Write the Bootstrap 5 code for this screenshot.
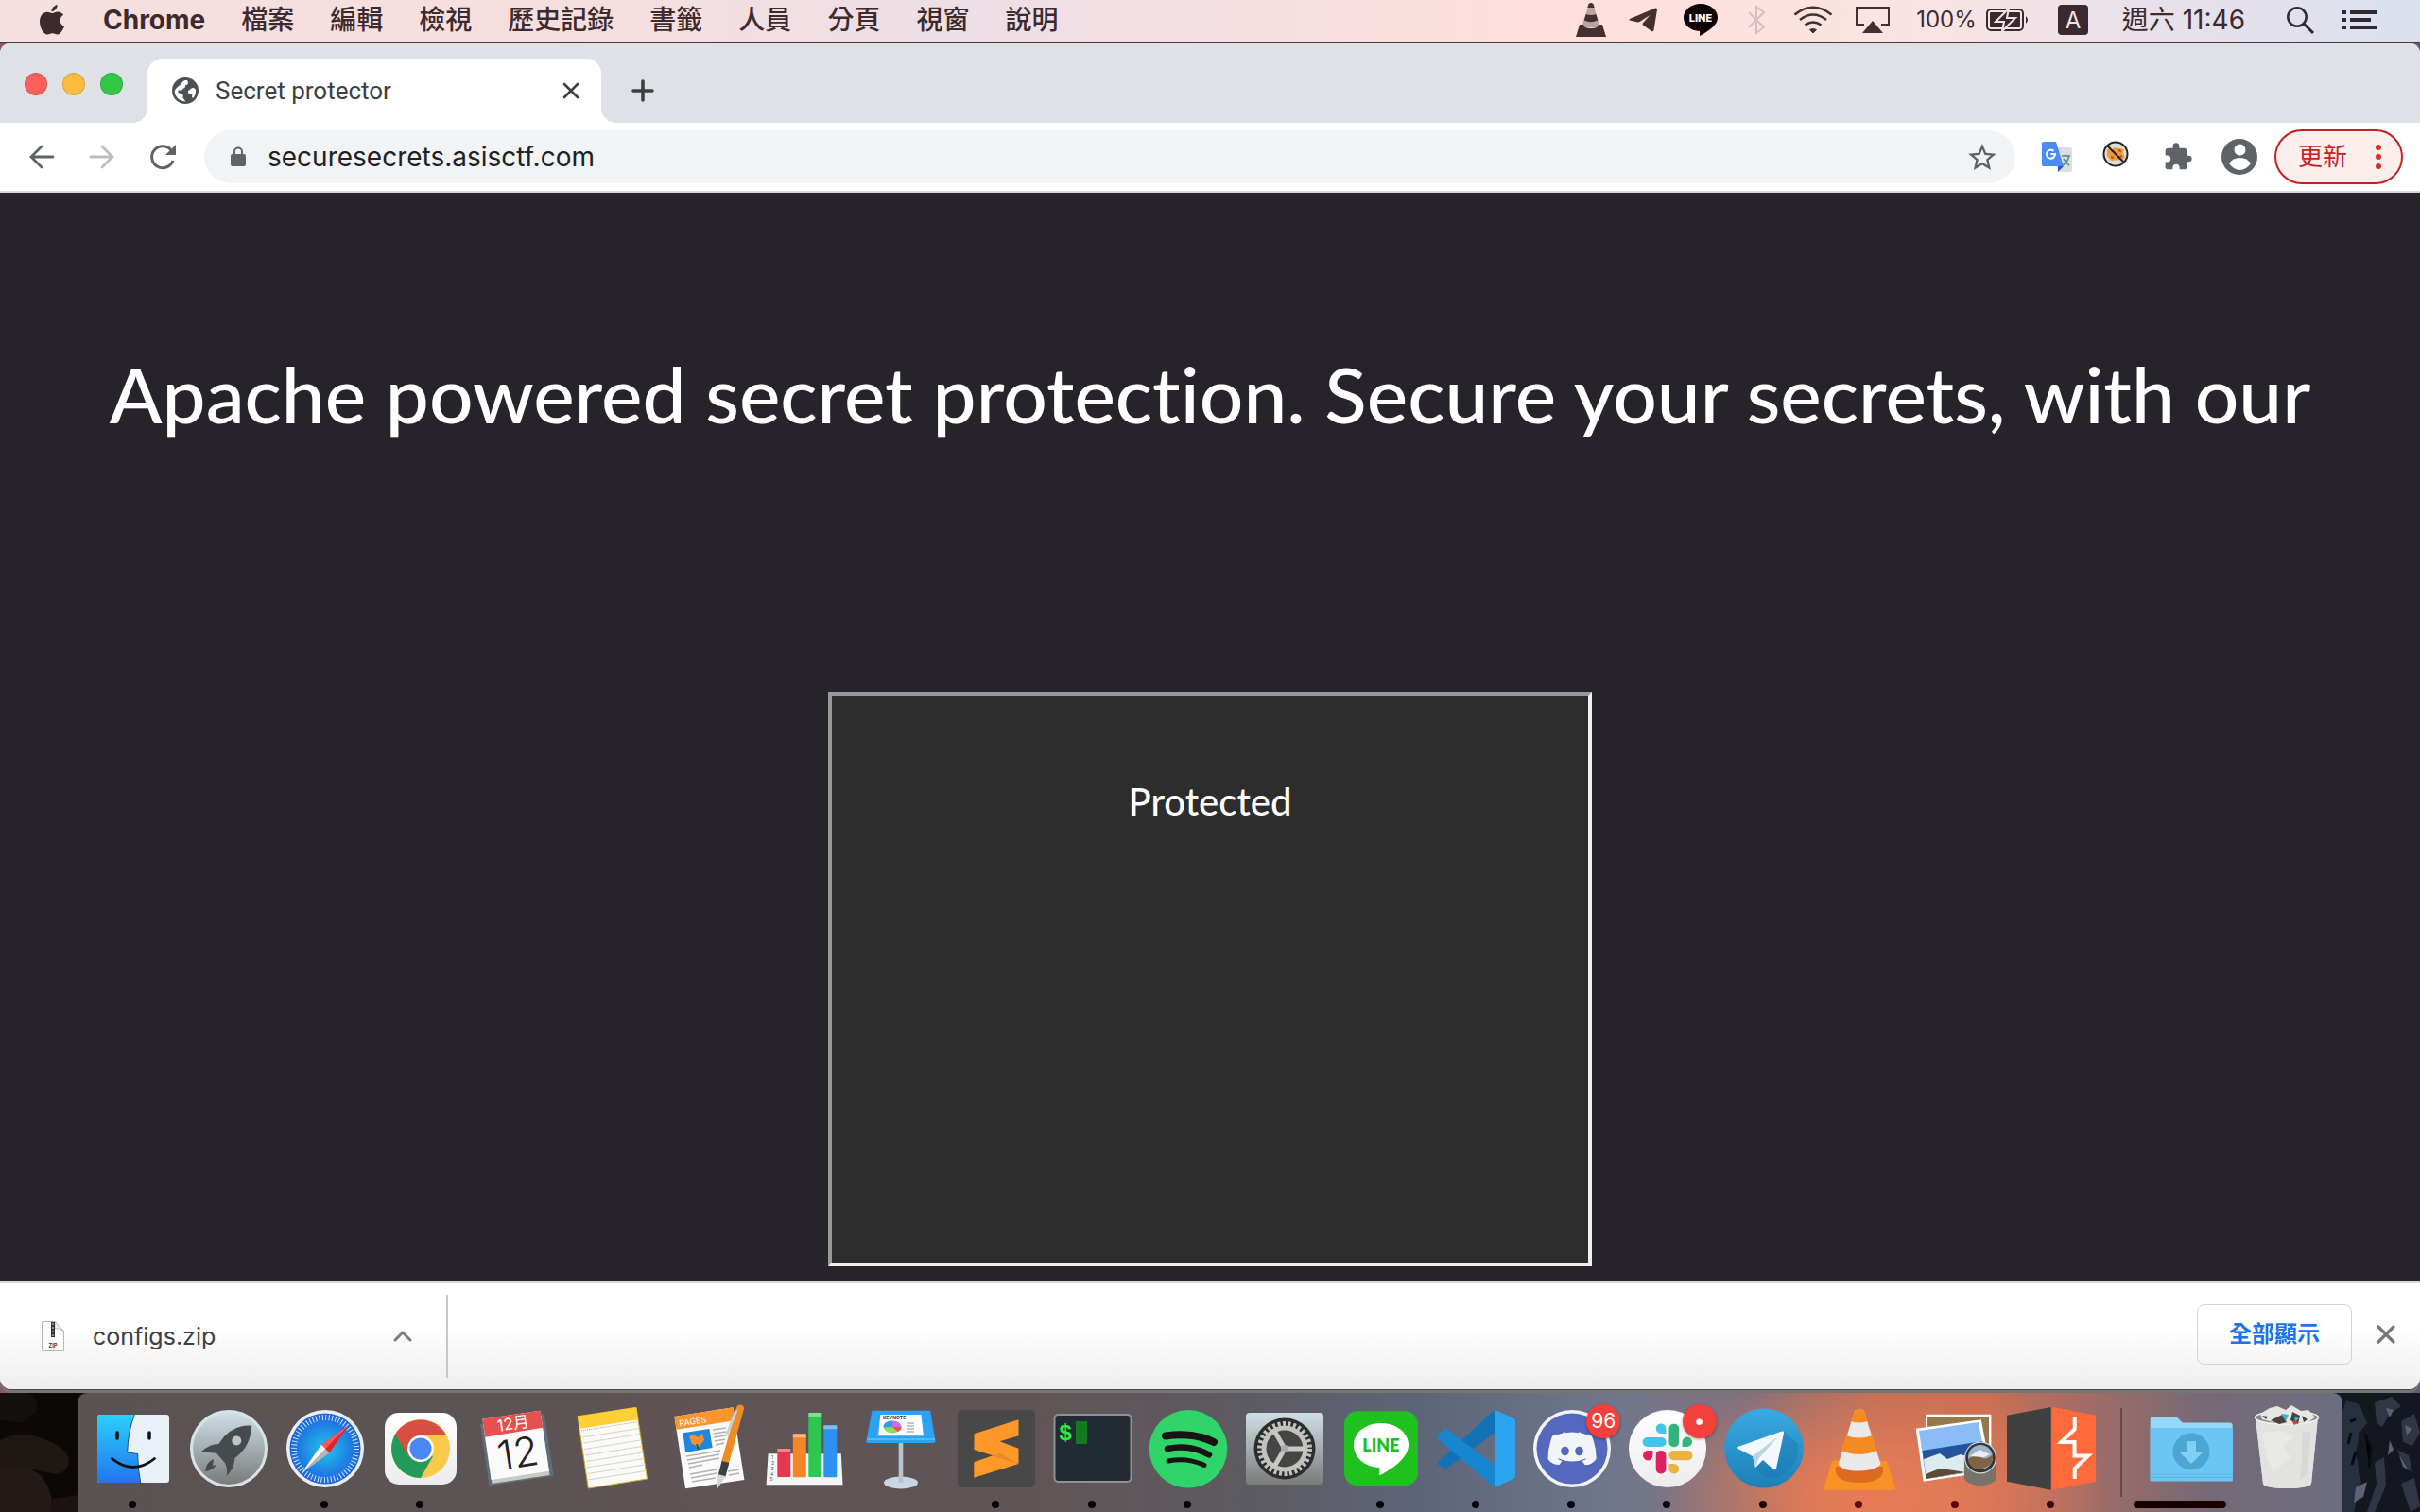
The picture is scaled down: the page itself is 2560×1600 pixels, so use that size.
<!DOCTYPE html>
<html lang="zh-Hant">
<head>
<meta charset="utf-8">
<meta name="viewport" content="width=device-width, initial-scale=1">
<title>Secret protector</title>
<link href="https://cdn.jsdelivr.net/npm/bootstrap@5.3.0/dist/css/bootstrap.min.css" rel="stylesheet">
<style>
  body { font-family: Inter, "Noto Sans CJK TC", sans-serif; font-size: 25px; line-height: 32px; background: #0d0c0e; overflow-x: hidden; }
  svg { display: block; flex: none; overflow: visible; }
  button { font-family: inherit; }
  .ui-btn { border: 0; padding: 0; background: none; display: flex; color: inherit; }
  .gl-10 { margin-left: 10px; } .gl-18 { margin-left: 18px; } .gl-24 { margin-left: 24px; } .gl-28 { margin-left: 28px; }
  .gl-30 { margin-left: 30px; } .gl-32 { margin-left: 32px; } .gl-36 { margin-left: 36px; } .gl-44 { margin-left: 44px; }
  .menu-bar { height: 46px; padding: 0 46px 2px 42px; color: #3d2a2d; border-bottom: 2px solid #57343b;
    background: linear-gradient(90deg, #f6dfe0 0, #f7dede 24%, #ecdfe6 39%, #f3dfe2 48%, #ffdfdd 64%, #f9e4e3 80%, #e9e1ea 88%, #dbe0ee 100%); }
  .menu-bar a { color: inherit; text-decoration: none; white-space: nowrap; }
  .menu-list { gap: 38px; margin-left: 41px; font-size: 28px; font-weight: 500; }
  .app-name { font-weight: 700; }
  .menu-clock { font-size: 28px; white-space: nowrap; }
  .menu-pct { font-size: 24px; }
  .desk-top { background: linear-gradient(90deg, #8a5a60, #5a5a7a); }
  .win { border-radius: 10px 10px 12px 12px; overflow: hidden; background: #fff; margin-bottom: 4px; box-shadow: 0 1px 0 #4b4a4a, 0 4px 0 #777574; position: relative; z-index: 1; }
  .tab-strip { height: 84px; background: #dee1e6; padding: 0 26px; }
  .light { width: 24px; height: 24px; border-radius: 50%; margin-bottom: 29px; border: 1px solid #0002; }
  .light-close { background: #fc605b; } .light-min { background: #fdbc40; } .light-max { background: #33c748; }
  .page-tab { position: relative; width: 480px; height: 68px; background: #fff; border-radius: 16px 16px 0 0; margin-left: 26px; padding: 0 24px 0 26px; color: #3c4043; }
  .page-tab::before, .page-tab::after { content: ""; position: absolute; bottom: 0; width: 16px; height: 16px; }
  .page-tab::before { right: 100%; background: radial-gradient(circle at 0 0, #0000 16px, #fff 16px); }
  .page-tab::after { left: 100%; background: radial-gradient(circle at 100% 0, #0000 16px, #fff 16px); }
  .tab-title { font-size: 26px; font-family: Roboto, sans-serif; }
  .new-tab { margin: 0 0 22px 32px; }
  .tool-row { height: 74px; padding: 0 18px 0 28px; border-bottom: 2px solid #d5d8d9; background: #fff; color: #5f6368; }
  .omni { height: 56px; border-radius: 28px; background: #f1f3f4; padding: 0 20px 0 26px; margin: 0 28px; min-width: 0; }
  .omni input { border: 0; background: none; outline: 0; font-size: 28px; color: #202124; min-width: 0; padding: 0; margin-left: 21px; font-family: inherit; }
  .cookie-ext { margin: 0 0 6px 32px; }
  .update-btn { height: 58px; width: 136px; border: 2px solid #c5221f; border-radius: 29px; background: #fceeed; color: #c5221f; font-size: 26px; padding: 0 21px 0 23px; margin-left: 18px; }
  .site { background: #26242a; color: #fff; font-family: Lato, sans-serif; font-variant-ligatures: none; padding: 158px 0 16px; overflow: hidden; }
  .site h1 { font-size: 82px; line-height: 108px; font-weight: 500; white-space: nowrap; margin: 0 0 262px; }
  .vault { width: 808px; max-width: 100%; height: 608px; background: #2d2d2d; border: 4px solid; border-color: #9a9a9a #eee #eee #9a9a9a; padding-top: 88px; }
  .vault h2 { font-size: 40px; line-height: 48px; font-weight: 500; margin: 0; }
  .shelf { height: 114px; border-top: 2px solid #d9d9da; background: linear-gradient(#fff 40%, #eee); padding: 0 26px 0 44px; color: #3c4043; }
  .dl-item { height: 88px; width: 430px; border-right: 2px solid #c8c8c8; padding-right: 36px; }
  .shelf-end { gap: 26px; }
  .show-all { width: 164px; height: 64px; border: 1px solid #d2d4d7; border-radius: 8px; background: none; color: #1a73e8; font-size: 24px; font-weight: 700; padding: 0; }
  .desk-low { position: relative; height: 126px; padding: 0 82px; background: linear-gradient(90deg, #0d0a09 50%, #171a24 50%); }
  .rocks { position: absolute; top: 0; overflow: hidden; }
  .dock { position: relative; height: 126px; padding: 0 8px; border-radius: 10px 10px 0 0; margin: 0;
    background: radial-gradient(ellipse 240px 130px at 1910px 110px, #e87a55 0, #e07a58 30%, #e07a5800 100%),
    linear-gradient(90deg, #5a5253 0, #605556 42%, #5d5b62 52%, #5e6478 59%, #70778c 68%, #87717a 74%, #ba6e57 79%, #c96f52 84%, #a86c64 88%, #756a76 94%, #6c6d80 100%); }
  .dock-app { position: relative; flex: 1 1 0; min-width: 0; display: flex; justify-content: center; }
  .dock-rule { flex: 0 0 46px; display: flex; justify-content: center; padding-top: 16px; }
  .dock-rule span { width: 2px; height: 94px; background: #6f4648; }
  .note-badge { position: absolute; left: 66px; top: 12px; width: 36px; height: 36px; border-radius: 50%; background: #f4403d; color: #fff; font-size: 21px; line-height: 36px; text-align: center; box-shadow: 0 1px 3px #0006; }
</style>
</head>
<body class="d-flex flex-column min-vh-100">

<header class="menu-bar d-flex align-items-center justify-content-between">
  <nav class="d-flex align-items-center" aria-label="Menu">
    <svg width="26" height="32" viewBox="0 0 26 32" fill="#3d2a2d"><path d="M18.600 0c.3 3.600-2.700 7.200-6 7.200C12.200 4 15.300.5 18.600 0zM13.300 9c1.500 0 3.200-1.500 6-1.500 2.400 0 4.600 1.300 5.900 3.300-5.200 3-4.400 10 .8 12.300-1.200 3.300-4 8.400-7 8.400-2.200 0-3-1.300-5.500-1.300s-3.400 1.300-5.500 1.300C4.300 31.500 0 24.500 0 18c0-6.800 4-10.300 7.900-10.300C10.400 7.700 12.200 9 13.300 9z"/></svg>
    <div class="menu-list d-flex align-items-center">
      <a href="#" class="app-name">Chrome</a><a href="#">檔案</a><a href="#">編輯</a><a href="#">檢視</a><a href="#">歷史記錄</a><a href="#">書籤</a><a href="#">人員</a><a href="#">分頁</a><a href="#">視窗</a><a href="#">說明</a>
    </div>
  </nav>
  <div class="d-flex align-items-center">
    <svg width="32" height="36" viewBox="0 0 32 36"><path d="M13 4h6l7 22H6z" fill="#bba4a5"/><path d="M13.600 1q2.400-2 4.800 0l1.300 4h-7.400zM10.700 12q5.300 2 10.600 0l2 6.500q-7.300 3.500-14.600 0zM4 23h4q0 4 8 4t8-4h4l4 13H0z" fill="#452f31"/></svg>
    <svg class="gl-24" width="30" height="26" viewBox="0 0 30 26" fill="#452f31"><path d="M1 12 28 .5q2-.5 2 1.500L26.500 24q-.7 2-2.500 1l-9-6.500q-1-1 0-2.200L22.500 8 11.500 15q-1.500.8-3 .3L1 13.500q-1.500-.8 0-1.500z"/></svg>
    <svg class="gl-28" width="36" height="34" viewBox="0 0 36 34"><path d="M18 0c10 0 18 6.500 18 14.500S27 28.500 17 34v-5C7 28.500 0 22.500 0 14.500S8 0 18 0z" fill="#0e0002"/><text x="18" y="19" font-size="11" font-weight="800" fill="#fff" text-anchor="middle">LINE</text></svg>
    <svg class="gl-32" width="18" height="32" viewBox="0 0 18 32" fill="none" stroke="#d4bfc0" stroke-width="2"><path d="m1 8 16 16-8 6V2l8 6L1 24"/></svg>
    <svg class="gl-30" width="42" height="30" viewBox="0 0 42 30" fill="none" stroke="#452f31" stroke-width="2.600"><path d="M1.500 9.500Q21-6 40.500 9.500M7 15Q21 4 35 15M12.500 20.500q8.500-6 17 0"/><path d="m17.500 25.500 3.500 3.500 3.500-3.500q-3.500-2-7 0z" fill="#452f31" stroke-width="1"/></svg>
    <svg class="gl-24" width="36" height="28" viewBox="0 0 36 28"><path d="M9 19H1V1h34v18h-8" fill="none" stroke="#452f31" stroke-width="2"/><path d="m18 15 11 13H7z" fill="#452f31"/></svg>
    <span class="menu-pct gl-28">100%</span>
    <svg class="gl-10" width="46" height="24" viewBox="0 0 46 24"><rect x="1" y="1" width="38" height="22" rx="4" fill="none" stroke="#3a2a30" stroke-width="2"/><rect x="4" y="4" width="32" height="16" rx="1" fill="#3a2a30"/><path d="M42 8q4 4 0 8z" fill="#3a2a30"/><path d="M24 0 10 14h9l-2 10 14-14h-9l2-10z" fill="#3a2a30" stroke="#f3e3e6" stroke-width="2"/></svg>
    <svg class="gl-30" width="32" height="32" viewBox="0 0 32 32"><rect width="32" height="32" rx="4" fill="#3a2a30"/><text x="16" y="25" font-size="24" fill="#f3e3e6" text-anchor="middle">A</text></svg>
    <span class="menu-clock gl-36">週六 11:46</span>
    <svg class="gl-44" width="29" height="29" viewBox="0 0 29 29" fill="none" stroke="#2f2933" stroke-width="2.500"><circle cx="11" cy="11" r="9.700"/><path d="m18 18 10 10" stroke-width="3"/></svg>
    <svg class="gl-30" width="36" height="20" viewBox="0 0 36 20" fill="#2f2933"><path d="M0 0h4v4H0zM8 0h28v4H8zM0 8h4v4H0zM8 8h22v4H8zM0 16h4v4H0zM8 16h28v4H8z"/></svg>
  </div>
</header>

<div class="desk-top d-flex flex-column flex-grow-1">
<div class="win d-flex flex-column flex-grow-1">
  <div class="tab-strip d-flex align-items-end">
    <div class="d-flex gap-3"><span class="light light-close"></span><span class="light light-min"></span><span class="light light-max"></span></div>
    <div class="page-tab d-flex align-items-center">
      <svg width="28" height="28" viewBox="0 0 28 28"><circle cx="14" cy="14" r="14" fill="#4d5156"/><path d="M14 3c-3.500 1-2.500 2.500-5 4-.5 2-3 2-4 4-2 1-1.500 3-2.400 3 .4 7 5.400 11 11.400 11.400 0-2-2.500-2.400-2.500-4.400 1.500-3-2-4.500-5-4.500v-3c3 0 5 .5 5-2 3 0 2-2 3-3.500 2 0 3.500-2 1.500-5zM25 13c-2-3-4.500-2-6 0-2.500.5-3 4 0 4.300 2-.3 3 .3 2 3.300l1 1.400c2-2 3.500-6 3-9z" fill="#fff"/></svg>
      <span class="tab-title gl-18 flex-grow-1">Secret protector</span>
      <button class="ui-btn" aria-label="Close tab"><svg width="16" height="16" viewBox="0 0 16 16" stroke="#3c4043" stroke-width="2.600" stroke-linecap="round"><path d="m1 1 14 14M15 1 1 15"/></svg></button>
    </div>
    <button class="ui-btn new-tab" aria-label="New tab"><svg width="24" height="24" viewBox="0 0 24 24" stroke="#3c4043" stroke-width="3.600" stroke-linecap="round"><path d="M12 2v20M2 12h20"/></svg></button>
  </div>
  <div class="tool-row d-flex align-items-center">
    <button class="ui-btn" aria-label="Back"><svg width="32" height="32" viewBox="0 0 32 32" fill="none" stroke="#5f6368" stroke-width="2.800" stroke-linecap="round"><path d="M28 16H5M16 5 5 16l11 11"/></svg></button>
    <button class="ui-btn gl-32" aria-label="Forward"><svg width="32" height="32" viewBox="0 0 32 32" fill="none" stroke="#bcbdbf" stroke-width="2.800" stroke-linecap="round"><path d="M4 16h23M16 5l11 11-11 11"/></svg></button>
    <button class="ui-btn gl-32" aria-label="Reload"><svg width="32" height="32" viewBox="0 0 32 32" fill="none" stroke="#5f6368" stroke-width="3"><path d="M25.600 9.600A11.500 11.500 0 1 0 27 20"/><path d="M30 3v11H19z" fill="#5f6368" stroke="none"/></svg></button>
    <div class="omni d-flex align-items-center flex-grow-1">
      <svg width="20" height="24" viewBox="0 0 20 24"><rect x="2" y="9" width="16" height="13" rx="2" fill="#5f6368"/><path d="M6 10V6.500a4 4 0 0 1 8 0V10" fill="none" stroke="#5f6368" stroke-width="2"/></svg>
      <input class="flex-grow-1" type="text" aria-label="Address" value="securesecrets.asisctf.com">
      <button class="ui-btn" aria-label="Bookmark"><svg width="30" height="30" viewBox="0 0 24 24"><path fill="#5f6368" d="m22 9.240-7.190-.62L12 2 9.190 8.630 2 9.240l5.460 4.730L5.820 21 12 17.270 18.180 21l-1.630-7.030zM12 15.400l-3.760 2.270 1-4.280-3.320-2.880 4.380-.38L12 6.100l1.710 4.040 4.380.38-3.320 2.880 1 4.280z" transform="translate(-2.200 -1.600) scale(1.180)"/></svg></button>
    </div>
    <button class="ui-btn" aria-label="Translate"><svg width="32" height="32" viewBox="0 0 32 32"><path d="M14 6h16a2 2 0 0 1 2 2v22a2 2 0 0 1-2 2H17z" fill="#dcdde0"/><path d="M21 15h9M25.500 13v3M22 25q6-4 6.500-9.500M23 18q2 4 6 7" fill="none" stroke="#5d8491" stroke-width="1.600"/><path d="M17 26h6l-6 6z" fill="#3454b4"/><path d="M1.500 0H15l8 26H1.500A1.500 1.500 0 0 1 0 24.500v-23A1.500 1.500 0 0 1 1.500 0z" fill="#4b8bf5"/><path d="M12.500 9.800A4.500 4.500 0 1 0 14 13H9.500" fill="none" stroke="#fff" stroke-width="2"/></svg></button>
    <button class="ui-btn cookie-ext" aria-label="Cookie extension"><svg width="28" height="28" viewBox="0 0 28 28"><circle cx="14" cy="14" r="12.500" fill="#dddcd6" stroke="#222" stroke-width="2"/><path d="M5 9h5l3-2 10 2-1 4 2 5-3 2-12 1-4-5z" fill="#f49a3a"/><path d="m10 11 3 1M17 10l3 1M18 17l3-1M9 17l3 1" stroke="#a55d17" stroke-width="2"/><path d="m5 5 18 18" stroke="#222" stroke-width="2"/></svg></button>
    <button class="ui-btn gl-36" aria-label="Extensions"><svg width="32" height="32" viewBox="0 0 24 24" fill="#5f6368"><path d="M20.500 11H19V7c0-1.100-.9-2-2-2h-4V3.500a2.500 2.500 0 0 0-5 0V5H4c-1.100 0-2 .9-2 2v3.800h1.500a2.700 2.700 0 0 1 0 5.400H2V20c0 1.100.9 2 2 2h3.800v-1.500a2.700 2.700 0 0 1 5.400 0V22H17c1.100 0 2-.9 2-2v-4h1.500a2.500 2.500 0 0 0 0-5z"/></svg></button>
    <button class="ui-btn gl-30" aria-label="Profile"><svg width="38" height="38" viewBox="0 0 38 38"><circle cx="19" cy="19" r="19" fill="#5f6368"/><circle cx="19.500" cy="11.500" r="6" fill="#fff"/><path d="M8 26q4-6 11.500-6T31 26q-5 7-11.500 7T8 26z" fill="#fff"/></svg></button>
    <button class="update-btn d-flex align-items-center justify-content-between"><span>更新</span><svg width="6" height="26" viewBox="0 0 6 26" fill="#d93025"><circle cx="3" cy="3" r="3"/><circle cx="3" cy="13" r="3"/><circle cx="3" cy="23" r="3"/></svg></button>
  </div>

  <main class="site flex-grow-1 d-flex flex-column align-items-center">
    <h1>Apache powered secret protection. Secure your secrets, with our</h1>
    <section class="vault text-center"><h2>Protected</h2></section>
  </main>

  <footer class="shelf d-flex align-items-center justify-content-between">
    <div class="dl-item d-flex align-items-center">
      <svg width="24" height="32" viewBox="0 0 24 32"><path d="M.5.500H14l9.500 10v21H.5z" fill="#fdfdfd" stroke="#b5b5b5"/><path d="M14 .5v7q5 0 9.500 3z" fill="#eee" stroke="#bbb"/><path d="M10 1h4v16h-4z" fill="#333"/><path d="M11 3h2M11 7h2M11 11h2M11 15h2" stroke="#ddd"/><text x="12" y="27.500" font-size="6" font-weight="600" fill="#333" text-anchor="middle">ZIP</text></svg>
      <a href="#" class="gl-30 flex-grow-1 text-reset text-decoration-none">configs.zip</a>
      <button class="ui-btn" aria-label="Download options"><svg width="20" height="12" viewBox="0 0 20 12" fill="none" stroke="#7a7d80" stroke-width="3" stroke-linecap="round"><path d="m2 10 8-8 8 8"/></svg></button>
    </div>
    <div class="shelf-end d-flex align-items-center mb-1">
      <button class="show-all">全部顯示</button>
      <button class="ui-btn" aria-label="Close"><svg width="20" height="20" viewBox="0 0 20 20" stroke="#74777a" stroke-width="3.200" stroke-linecap="round"><path d="m2 2 16 16M18 2 2 18"/></svg></button>
    </div>
  </footer>
</div>
</div>

<div class="desk-low">
  <svg class="rocks start-0" width="82" height="126" viewBox="0 0 82 126"><rect width="82" height="126" fill="#0b0807"/><path d="M0 0h30q12 8 8 20l-16 12L0 28z" fill="#14100e"/><path d="M0 50q20-10 38-4 30 8 35 24 0 14-14 16l-30-6L0 78z" fill="#1f1714"/><path d="M0 76q30 0 44 12 14 20 10 38H0z" fill="#231a17"/><path d="m56 112 26-4v18H52z" fill="#1a1311"/></svg>
  <svg class="rocks end-0" width="82" height="126" viewBox="0 0 82 126"><rect width="82" height="126" fill="#141720"/><path d="m4 8 14 4 8 20-8 10-4 22 6 30-8 32H0V20z" fill="#26303f"/><path d="m34 10 18-6 10 10-12 8-8 14-6-4zM62 30l14-8 6 20-8 14-10-4zM58 60l12 6 4 18-10-6zM34 74l10-6 2 30-12 28h-8l10-30zM62 96l14-6 6 30-10 6z" fill="#313645"/><path d="m46 16 8 2-4 8zM66 34l8 4-6 6zM14 100l12-6-4 16-10 6zM60 66l4 12 6 4zM50 50l4 10-6 6z" fill="#5c6274"/><path d="m8 30 6-2M6 54l3-12M10 76l4-14M24 44l6 14-2 20" stroke="#0a0b10" stroke-width="3"/></svg>
  <ul class="dock d-flex list-unstyled">
    <li class="dock-app"><button class="ui-btn" aria-label="Finder"><svg width="100" height="126" viewBox="0 0 100 126"><defs>
      <linearGradient id="gFb" x1="0" y1="0" x2="0" y2="1"><stop stop-color="#2ad0fd"/><stop offset="1" stop-color="#2474ee"/></linearGradient>
      <linearGradient id="gGray" x1="0" y1="0" x2="0" y2="1"><stop stop-color="#cfdfe6"/><stop offset="1" stop-color="#7b7b7a"/></linearGradient>
      <radialGradient id="gSaf"><stop stop-color="#22c4ee"/><stop offset="1" stop-color="#1e62dd"/></radialGradient>
      <linearGradient id="gTg" x1="0" y1="0" x2="0" y2="1"><stop stop-color="#3ba9e2"/><stop offset="1" stop-color="#1b80b7"/></linearGradient>
      <linearGradient id="gWhite" x1="0" y1="0" x2="0" y2="1"><stop stop-color="#fff"/><stop offset="1" stop-color="#ececec"/></linearGradient>
      </defs><rect x="12" y="23" width="76" height="72" rx="3" fill="#e9f0f8"/><path d="M15 23h36.300q-7 18-7.600 40l11 1.500q0 16 3 30.500H15q-3 0-3-3V26q0-3 3-3z" fill="url(#gFb)"/><path d="M51.300 23q-7 18-7.600 40l11 1.500q0 16 3 30.500" fill="none" stroke="#1b4f86" stroke-width="1"/><path d="M33 42v6M67 42v6" stroke="#111" stroke-width="3.500" stroke-linecap="round"/><path d="M27.500 69.500q22.500 18 45 0" fill="none" stroke="#111" stroke-width="2.800" stroke-linecap="round"/><circle cx="49" cy="118" r="4"/></svg></button></li>
    <li class="dock-app"><button class="ui-btn" aria-label="Launchpad"><svg width="100" height="126" viewBox="0 0 100 126"><circle cx="50" cy="59" r="41" fill="#d8e3e8"/><circle cx="50" cy="59" r="38" fill="url(#gGray)"/><path d="M74.300 34.700Q52 33 39.500 54q-10 0-18.500 8.300l16 1.500 9 10.500q3 6 1.700 13.400Q56 80 56.500 69 73 57 74.300 34.700z" fill="#474b4e"/><circle cx="58.300" cy="50.500" r="5" fill="#b9c5c9"/><path d="M34 70q-8 3-9 13 8-1 12-7l-4 1z" fill="#474b4e"/></svg></button></li>
    <li class="dock-app"><button class="ui-btn" aria-label="Safari"><svg width="100" height="126" viewBox="0 0 100 126"><circle cx="50" cy="59" r="41" fill="#e9eef2"/><circle cx="50" cy="59" r="37.500" fill="url(#gSaf)"/><circle cx="50" cy="59" r="33" fill="none" stroke="#d5ecfa" stroke-width="6" stroke-dasharray="1 2.456"/><path d="m75 34-29 21 8.500 8.500z" fill="#e4222b"/><path d="m75 34-25 25-4-4z" fill="#ff5a52"/><path d="m25 85 21-30 8.500 8.500z" fill="#b5b5b5"/><path d="m25 85 21-30 4 4z" fill="#fff"/><circle cx="49" cy="118" r="4"/></svg></button></li>
    <li class="dock-app"><button class="ui-btn" aria-label="Chrome"><svg width="100" height="126" viewBox="0 0 100 126"><rect x="12" y="21" width="76" height="76" rx="15" fill="url(#gWhite)"/><circle cx="50" cy="59" r="31" fill="#f9c94c"/><path d="M50 59 23.200 43.500A31 31 0 0 0 50 90l13-23z" fill="#239a5a"/><path d="M23.200 43.500A31 31 0 0 1 77 44.500H50V59l-13 8z" fill="#d84e43"/><circle cx="50" cy="59" r="14" fill="#fff"/><circle cx="50" cy="59" r="11.500" fill="#4b87f0"/><circle cx="49" cy="118" r="4"/></svg></button></li>
    <li class="dock-app"><button class="ui-btn" aria-label="Calendar"><svg width="100" height="126" viewBox="0 0 100 126"><path d="m11 32.700 67.700-10.700 10 65.700-68.200 10.600z" fill="#5d6f78"/><path d="m15 32 60-10 9.500 65-61 9z" fill="#c9c9c7"/><path d="m13.300 27.700 61-9 9.600 64-61.300 9.300z" fill="#fbfbfb"/><path d="m13.300 27.700 61-9 3 18-61 10z" fill="#e6514f"/><g transform="rotate(-9 50 59)" text-anchor="middle"><text x="50" y="38" font-size="17" fill="#fff">12月</text><text x="50" y="79" font-size="43" font-weight="300" fill="#222">12</text></g></svg></button></li>
    <li class="dock-app"><button class="ui-btn" aria-label="Notes"><svg width="100" height="126" viewBox="0 0 100 126"><path d="m13 24.700 62-9.400L86.600 91l-62.300 10z" fill="#fbfaf5" stroke="#d5a81e"/><path d="m13 24.700 62-9.400 2 13-61 9.400z" fill="#fdd136"/><path d="m17 40 60-9.500" stroke="#aaa" stroke-dasharray="1 1"/><path d="m18 47 60-9.500M19 53l60-9.500M20 59.500 80 50M21 66l60-9.500M22 72.500 82 63M22.500 79l60.500-9.500M23.500 85.500 84 76M24 92l61-9.500" stroke="#d2d2d2"/></svg></button></li>
    <li class="dock-app"><button class="ui-btn" aria-label="Pages"><svg width="100" height="126" viewBox="0 0 100 126"><path d="m13.400 25 62-9.700 12 76.700-62.300 9.300z" fill="#fafafa"/><path d="m13.400 25 62-9.700 2.100 14-61.700 9.400z" fill="#fb952b"/><text x="19" y="35.500" font-size="9" fill="#fff" transform="rotate(-9 19 35)">PAGES</text><path d="m22.400 42.300 28-4.300 3.300 20-28.600 5z" fill="#1f86e0"/><path d="m29 46 5-2 4 3 5-4 2 7-6 7-7-3z" fill="#f7912c"/><path d="m37 54 2 6" stroke="#2c5f2a" stroke-width="2"/><path d="m54 39 14-2M54.500 43l14-2M55 47l13-2M56 51l11-2M57 55l9-2M26 67l36-6M27 71l34-6M28 75l33-6M29 79l14-3M30 86l28-5M31 90l27-5M32 94l25-4M70 83l12-2M71 87l11-2" stroke="#b2b2b2" stroke-width="1.500"/><path d="M83 16.500 67 74" stroke="#ee8d23" stroke-width="8" stroke-linecap="round"/><path d="m79 18-10 26" stroke="#bcd3e3" stroke-width="3"/><path d="m67.500 73-4 15" stroke="#3b3f42" stroke-width="8"/><path d="m59.500 86 8 2-9 14z" fill="#ccd8e0"/></svg></button></li>
    <li class="dock-app"><button class="ui-btn" aria-label="Numbers"><svg width="100" height="126" viewBox="0 0 100 126"><path d="M11.600 64.300h77.200l1.700 33H9.600z" fill="#f5f5f5"/><g font-size="5" fill="#555"><text x="15" y="70">1</text><text x="15" y="76">2</text><text x="14.500" y="82">3</text><text x="14" y="87.500">4</text><text x="13.500" y="93">5</text></g><rect x="21.300" y="59" width="14" height="30" rx="1" fill="#e53650"/><rect x="37.800" y="43.300" width="14" height="46" rx="1" fill="#f58528"/><rect x="54.300" y="21" width="14" height="68" rx="1" fill="#2cc650"/><rect x="70.300" y="34.300" width="14" height="55" rx="1" fill="#2b93ef"/><path d="M21.300 61h14M37.800 45.300h14M54.300 23h14M70.300 36.300h14" stroke="#fff6" stroke-width="4"/></svg></button></li>
    <li class="dock-app"><button class="ui-btn" aria-label="Keynote"><svg width="100" height="126" viewBox="0 0 100 126"><ellipse cx="50" cy="95" rx="18" ry="6.500" fill="#c9d6e4"/><path d="M47.700 52h4.600v43h-4.600z" fill="#b9c3cc"/><path d="M19.500 18.700h61.600L86.600 51q0 2-2 2H15q-2 0-1.700-2z" fill="#2ba3f4"/><path d="M14 49h72" stroke="#7fd0fb"/><path d="M28.400 23h43l2.600 22.300H26z" fill="#fdfdfd"/><text x="31" y="28" font-size="5" font-weight="700" fill="#333">KEYNOTE</text><ellipse cx="41" cy="36" rx="9.500" ry="6.500" fill="#8bdc55"/><path d="M41 36V29.500q-9.500 0-9.500 7z" fill="#28a0f0"/><path d="M41 36v-6.500q8 0 9.500 6.500z" fill="#c56ce8"/><path d="M41 36h9.500q0 4-4 5z" fill="#f34e4e"/><path d="M56 32h8M56 35h8M56 38h8M56 41h8" stroke="#8e8e8e"/></svg></button></li>
    <li class="dock-app"><button class="ui-btn" aria-label="Sublime Text"><svg width="100" height="126" viewBox="0 0 100 126"><rect x="9" y="18" width="82" height="82" rx="5" fill="#484848"/><path d="m26.300 73.300 20-7L73.500 75 26.300 89.700z" fill="#ff9a28"/><path d="m73.500 28.300-47 15v16.700L73.500 75V58.700l-20-7.400 20-6z" fill="#ff9828"/><path d="m46 66.300 8-2.300 19.500 11z" fill="#e88b24"/><circle cx="49" cy="118" r="4"/></svg></button></li>
    <li class="dock-app"><button class="ui-btn" aria-label="Terminal"><svg width="100" height="126" viewBox="0 0 100 126"><rect x="9.500" y="23" width="81" height="71" rx="4" fill="#222b33" stroke="#8d9296" stroke-width="2"/><text x="14" y="50" font-family="Liberation Mono, monospace" font-size="24" font-weight="700" fill="#2fec3b">$</text><path d="M32 30h12v24H32z" fill="#147a22"/><circle cx="49" cy="118" r="4"/></svg></button></li>
    <li class="dock-app"><button class="ui-btn" aria-label="Spotify"><svg width="100" height="126" viewBox="0 0 100 126"><circle cx="50" cy="59.300" r="41.300" fill="#2fd568"/><g fill="none" stroke="#191414" stroke-linecap="round"><path d="M26 45.500q29-4.500 51 6.500" stroke-width="8"/><path d="M28 59q24-5 44 6.500" stroke-width="6.500"/><path d="M29 72q20-4 38 4.500" stroke-width="5"/></g><circle cx="49" cy="118" r="4"/></svg></button></li>
    <li class="dock-app"><button class="ui-btn" aria-label="System Preferences"><svg width="100" height="126" viewBox="0 0 100 126"><rect x="9" y="21" width="82" height="76" rx="4" fill="url(#gGray)"/><circle cx="50" cy="59" r="32.500" fill="#2c2d2e"/><circle cx="50" cy="59" r="26.500" fill="none" stroke="#c3c2be" stroke-width="5" stroke-dasharray="3 2.550"/><circle cx="50" cy="59" r="22" fill="#454545" stroke="#c3c2be" stroke-width="5"/><path d="M50 59h22M50 59 39 40M50 59 39 78" stroke="#c8c7c4" stroke-width="5"/><circle cx="50" cy="59" r="4" fill="#aaa"/></svg></button></li>
    <li class="dock-app"><button class="ui-btn" aria-label="LINE"><svg width="100" height="126" viewBox="0 0 100 126"><rect x="12" y="19.300" width="78" height="79" rx="14" fill="#1fc11f"/><path d="M51 32c16 0 29 10 29 23 0 12-14 24-30 32-2 0 .5-5-1-8-16-1-27-11-27-24 0-13 13-23 29-23z" fill="#fff"/><text x="51" y="62" font-size="18" font-weight="800" fill="#1fc11f" text-anchor="middle" font-family="Lato">LINE</text><circle cx="50" cy="118" r="4"/></svg></button></li>
    <li class="dock-app"><button class="ui-btn" aria-label="Visual Studio Code"><svg width="100" height="126" viewBox="0 0 100 126"><path d="M8.600 73.300 69 18l1.600 23L19 79.500q-2 1.500-4 0l-6.400-4z" fill="#1173b6"/><path d="M8.600 46 15 38.500q2-1.500 4 0l51.600 39L69 100 9.500 49q-2-1.500-.9-3z" fill="#1686d0"/><path d="m69 18 20 8.500q2 1 2 3V88q0 2-2 3L69 100z" fill="#2ba5f0"/><circle cx="49" cy="118" r="4"/></svg></button></li>
    <li class="dock-app"><button class="ui-btn" aria-label="Discord"><svg width="100" height="126" viewBox="0 0 100 126"><circle cx="50" cy="59" r="41" fill="#f3f4f6"/><circle cx="50" cy="59" r="37.500" fill="#5468bd"/><path d="M35 44q15-5 30 0 4-1 6 2 5 12 4.500 24-5 7-12 6l-3-4q4-1 5-3-15 7-31 0 2 2.500 5 3l-3 4q-8 0-12-6 0-13 4.500-24 2-3 6-2z" fill="#f3f4f7"/><path d="m34 46 9-4M66 46l-9-4" stroke="#f3f4f7" stroke-width="1.500"/><ellipse cx="42.500" cy="61.500" rx="4.300" ry="4.800" fill="#5468bd"/><ellipse cx="57.500" cy="61.500" rx="4.300" ry="4.800" fill="#5468bd"/><circle cx="49" cy="118" r="4" fill="#000011"/></svg><span class="note-badge">96</span></button></li>
    <li class="dock-app"><button class="ui-btn" aria-label="Slack"><svg width="100" height="126" viewBox="0 0 100 126"><circle cx="50" cy="59" r="41" fill="url(#gWhite)"/><g fill="#41c4ec"><rect x="23.600" y="47" width="25" height="10" rx="5"/><path d="M48.400 43v-5a5.300 5.300 0 1 0-5.300 5z"/></g><g fill="#34b37e"><rect x="51.500" y="32.700" width="10.700" height="24.500" rx="5"/><path d="M65.600 57h5a5.200 5.200 0 1 0-5-5z"/></g><g fill="#e0205f"><rect x="37.700" y="61" width="10.700" height="24.500" rx="5"/><path d="M34.400 61h-5a5.200 5.200 0 1 0 5 5z"/></g><g fill="#eab23e"><rect x="51.500" y="61" width="25" height="10.300" rx="5"/><path d="M51.500 75v5a5.300 5.300 0 1 0 5.300-5z"/></g><circle cx="49" cy="118" r="4" fill="#000011"/></svg><span class="note-badge">•</span></button></li>
    <li class="dock-app"><button class="ui-btn" aria-label="Telegram"><svg width="100" height="126" viewBox="0 0 100 126"><circle cx="50" cy="58.500" r="42" fill="url(#gTg)"/><path d="m71 40 15 14q2 18-14 31-10 6-22 4l-9-10z" fill="#1a74a8" opacity=".35"/><path d="M22.500 57 69 40.500q2.500-.5 2 2L63 80q-1 2-3 1L49 71l-8 8-3-12-15.500-8q-1-1 0-2z" fill="#f2f8fc"/><path d="m38 67 27-21-21 24-3 9z" fill="#b9d2e4"/><circle cx="49" cy="118" r="4" fill="#160404"/></svg></button></li>
    <li class="dock-app"><button class="ui-btn" aria-label="VLC"><svg width="100" height="126" viewBox="0 0 100 126"><path d="M22 71.700h56q1 0 1.500 1.500l8.500 28q0 1.500-1.500 1.500h-73q-1.500 0-1-1.500l8-28q.5-1.500 1.500-1.500z" fill="#f89225"/><path d="M25 78h50v6q-3 11-25 11T25 84z" fill="#dd6a20"/><path d="M45 18.500q5-2 9.500 0L72.500 75q-4 7-22.500 7.500T27.700 75z" fill="#e9e9e9"/><path d="M45 18.500q5-2 9.500 0L58.500 30q-9 3-17.500 0zM36 45q13.500 5 27.500 0l5 16q-19 8-37.500 0z" fill="#f58b20"/><circle cx="49" cy="118" r="4" fill="#5c0000"/></svg></button></li>
    <li class="dock-app"><button class="ui-btn" aria-label="Preview"><svg width="100" height="126" viewBox="0 0 100 126"><path d="M18 22.700h69.400V75H18z" fill="#fff"/><path d="M20 25h65v40H20z" fill="#96774a"/><path d="m7.800 37.700 69-9.400L87 83l-71.400 10.700z" fill="#fff"/><path d="m11 40 63-9 9.500 50-65 10z" fill="#8cbcf5"/><path d="m14.500 61 64-10 5 30-65 10z" fill="#24549c"/><path d="m16 70 17-6 8 6 14-5 12 4 14 8 2.500 4-65 10z" fill="#dcebf0"/><path d="m18 86 15-6 15 2 12 2-42 7z" fill="#5c4a35"/><path d="M58.900 69v22q5 7 17 7t17-7V69z" fill="#77736b"/><circle cx="76" cy="68.500" r="17" fill="#d5d8da"/><circle cx="76" cy="68.500" r="15.800" fill="#35373a"/><circle cx="76" cy="68" r="13" fill="#9db4c8"/><path d="M63 70q7-6 13-2t13-3q1 9-6 13-9 5-16 0-4-4-4-8z" fill="#806448"/><path d="m65 67 10-7 11 5-6 3z" fill="#e9f0f5"/><circle cx="49" cy="118" r="4" fill="#5c0000"/></svg></button></li>
    <li class="dock-app"><button class="ui-btn" aria-label="Burp Suite"><svg width="100" height="126" viewBox="0 0 100 126"><path d="m3 23.700 46.700-8.700v87.700L3 93.700z" fill="#404040"/><path d="m50.500 15 46.500 8.700v70l-46.500 9z" fill="#ff6a3d"/><path d="M74.700 26v12.500L60.500 52h14v14.500H89L74.700 80v11" fill="none" stroke="#fff" stroke-width="4"/><circle cx="49" cy="118" r="4" fill="#390000"/></svg></button></li>
    <li class="dock-rule" aria-hidden="true"><span></span></li>
    <li class="dock-app"><button class="ui-btn" aria-label="Downloads"><svg width="100" height="126" viewBox="0 0 100 126"><path d="M6.700 93V28q0-3 3-3h23q2 0 3 1.500l5 5h50q3 0 3 3V93z" fill="#96d8fa"/><path d="M6.700 37H94v55q0 1.500-1.500 1.500h-84q-1.800 0-1.800-1.500z" fill="#6bc6f3"/><path d="M7 86h87M7 89.500h87" stroke="#5ab4e4"/><circle cx="50" cy="62" r="19.500" fill="#4ba6d6"/><path d="M45 51h10v12h7L50 75 38 63h7z" fill="#7fd0f6"/><rect x="-11" y="114" width="98" height="8" rx="4" fill="#160000"/></svg></button></li>
    <li class="dock-app"><button class="ui-btn" aria-label="Trash"><svg width="100" height="126" viewBox="0 0 100 126"><path d="M17 26q33-14 66 0l-7 70q-3 5-26 5t-25-5z" fill="#e3e3e3"/><ellipse cx="50" cy="26" rx="33.500" ry="7" fill="#8a8a8a" stroke="#f3f3f3" stroke-width="1.500"/><path d="m22 22 10-6 8-2 9 4 6-5 10 6 8-1 7 8-8 5-12 1-10 1-14-2-12-3z" fill="#e6e6e2"/><path d="m33 29 12-6 5 8-8 2zM56 20l8 4-2 9-8-4zM66 24l6 4-4 3zM24 24l6 1-2 3z" fill="#4b4140"/><path d="m44 22 8 1-3 7zM58 25l5 2-4 4z" fill="#2fb9c8"/><path d="m55 29 8 2-5 3z" fill="#c9442c"/><path d="M17.500 30q32 12 65 0L76 96q-3 5-26 5t-25-5z" fill="#e2e2e1"/><path d="m24 42 20-2 14 6-12 10 8 12-18 16-7-16z" fill="#e9e9e8"/><path d="m66 42 10-2-4 46-8 6 2-20z" fill="#d9d9d8"/></svg></button></li>
  </ul>
</div>
<script src="https://cdn.jsdelivr.net/npm/bootstrap@5.3.0/dist/js/bootstrap.bundle.min.js"></script>
</body>
</html>
